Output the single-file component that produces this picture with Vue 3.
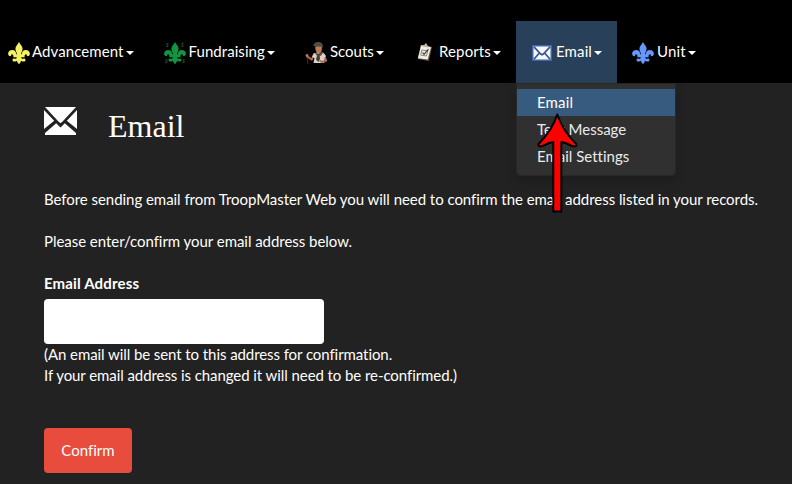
<script setup>
import { ref } from 'vue'

const email = ref('')
const nav = [
  { name: 'Advancement', icon: 'lis', tone: 'yellow' },
  { name: 'Fundraising', icon: 'lis', tone: 'green' },
  { name: 'Scouts', icon: 'scout' },
  { name: 'Reports', icon: 'report' },
  { name: 'Email', icon: 'mail', active: true },
  { name: 'Unit', icon: 'lis', tone: 'blue' },
]
const menu = ['Email', 'Text Message', 'Email Settings']
</script>

<template>
  <div class="page">
    <header class="navbar">
      <nav class="nav">
        <a v-for="item in nav" :key="item.name" class="nav-item" :class="[item.name.toLowerCase(), { active: item.active }]">
          <svg v-if="item.icon === 'lis'" class="icon" :class="item.tone" viewBox="0 0 22 22">
            <path d="M11 0C10.2 2.2 7.4 4 7.4 6.7C7.4 8.6 8.6 10 9 12.2H8.2C8 9.4 6.6 8 4.3 8C1.8 8 .1 9.6 .1 11.7C.1 13.4 1.6 14.7 3.2 14.1C2.7 13 3.4 12.2 4.4 12.4C5.3 12.6 5.5 13.4 5.4 15.2H8.8C8.6 16.5 7.8 17.2 6.7 16.7C5.6 16.2 4.4 17 4.5 18.2C4.7 19.7 6.6 20.2 8.9 18.7C9.3 20.2 10.1 21.2 11 22C11.9 21.2 12.7 20.2 13.1 18.7C15.4 20.2 17.3 19.7 17.5 18.2C17.6 17 16.4 16.2 15.3 16.7C14.2 17.2 13.4 16.5 13.2 15.2H16.6C16.5 13.4 16.7 12.6 17.6 12.4C18.6 12.2 19.3 13 18.8 14.1C20.4 14.7 21.9 13.4 21.9 11.7C21.9 9.6 20.2 8 17.7 8C15.4 8 14 9.4 13.8 12.2H13C13.4 10 14.6 8.6 14.6 6.7C14.6 4 11.8 2.2 11 0Z" />
            <path v-if="item.tone === 'green'" class="money" d="M4.5 1.5C2.8 .8 2 2.4 3.4 3S4.5 5.2 2.3 4.4M19.5 1.5C17.8 .8 17 2.4 18.4 3S19.5 5.2 17.3 4.4M3.5 17.8C1.8 17.1 1 18.5 2.4 19S3.5 21 1.3 20.4M20.7 17.8C19 17.1 18.2 18.5 19.6 19S20.7 21 18.5 20.4" />
          </svg>

          <svg v-else-if="item.icon === 'scout'" class="icon" viewBox="0 0 22 22">
            <path d="M1.7 12L3 22" stroke="#4d2a19" stroke-width="1" />
            <path d="M9 12L6.8 17.6L2.2 14.4" fill="none" stroke="#a9684d" stroke-width="2" stroke-linecap="round" stroke-linejoin="round" />
            <path d="M9 11.5L13 10L18.5 10.8L21 14L20 16L19 21H8.5L9.5 16L7 15Z" fill="#ddd0c8" />
            <path d="M10.7 10.3L12 13.5L11 17.5L13.3 20L15 17L14.7 13.7L17.5 10.8L15.8 9.7L13.6 12Z" fill="#3c4438" />
            <path d="M10.3 11.3L12.7 14M17.5 11.2L15.3 14" stroke="#9b3a35" stroke-width="1" />
            <path d="M20 15.5L21.2 18.5L17 20L14.5 18.5" fill="none" stroke="#ad6d50" stroke-width="1.9" stroke-linejoin="round" />
            <path d="M10.3 4.2H16.8V8.2C16.4 10 14.8 11.5 13 10.8C11.5 10.2 10 8.5 10.3 4.2Z" fill="#bb7959" />
            <path d="M8.2 3.8C9 .2 13-.5 15.6.6C17.7 1.3 18.2 3.6 17.7 6.3L16.3 4.2C13 3.5 11.5 4.7 8.2 3.8Z" fill="#4a5047" />
            <circle cx="2" cy="13.5" r="1.4" fill="#b37a58" />
          </svg>

          <svg v-else-if="item.icon === 'report'" class="icon report-icon" viewBox="0 0 17 20">
            <path d="M4 1.8L16 4L12.5 19L.7 17Z" fill="#65503d" />
            <path d="M4.4 2.4L14.9 4.3L11.4 17.5L1 16Z" fill="#f0eee8" />
            <path d="M6.4 2L8.2 1.7L9 .3L10.5.6L10.8 2.4L12.2 3L11.8 4.6L5.7 3.5Z" fill="#c5b49e" />
            <path d="M5.2 7.3L11.5 8.3L10 13.7L4 12.8Z" fill="none" stroke="#777269" stroke-width=".9" />
            <path d="M6 10L7.5 12L12.2 6.5" fill="none" stroke="#3d3b38" stroke-width="1.3" />
          </svg>

          <svg v-else class="icon mail-icon" viewBox="0 0 20 16">
            <path d="M0 0H20V16H0Z" fill="#4164ac" />
            <path d="M1.5 1.5H18.5V14.5H1.5Z" fill="#f5f7fb" />
            <path d="M2 1.8L8.7 9L10 9.8L11.3 9L18 1.8M2 14.2L7.3 8M18 14.2L12.7 8" fill="none" stroke="#34578f" stroke-width="1.7" />
          </svg>
          <span class="label">{{ item.name }}</span><i class="caret" />

          <span v-if="item.active" class="dropdown">
            <span v-for="(option, i) in menu" :key="option" class="option" :class="{ selected: i === 0 }">{{ option }}</span>
          </span>
        </a>
      </nav>
    </header>

    <main class="content">
      <div class="heading">
        <svg class="heading-icon" viewBox="0 0 33 28">
          <path d="M1 0H32L18.6 14.5L16.5 16.2L14.4 14.5ZM0 3L10.2 13.7L0 22ZM33 3L22.8 13.7L33 22ZM1 28V26L12.2 16.2L16.5 20.6L20.8 16.2L32 26V28Z" fill="#fff" />
        </svg>
        <h1>Email</h1>
      </div>
      <p class="intro">Before sending email from TroopMaster Web you will need to confirm the email address listed in your records.</p>
      <p>Please enter/confirm your email address below.</p>
      <label for="email">Email Address</label>
      <input id="email" v-model="email" type="email">
      <div class="help">(An email will be sent to this address for confirmation.<br>If your email address is changed it will need to be re-confirmed.)</div>
      <button type="button">Confirm</button>
    </main>

    <svg class="arrow" viewBox="0 0 42 102">
      <path d="M21.3 2.5C25 13.5 30 22 40.2 32C41 34 39 35 36 34L29.5 31L25.3 30V99.5H17.3V30L13 31L6.5 34C3.5 35 1.8 34 2.6 32C12.5 22 17.7 13.5 21.3 2.5Z" />
    </svg>
  </div>
</template>

<style>
body { background: #222; }
</style>

<style scoped>
* { box-sizing: border-box; }
.page { position: relative; width: 792px; height: 484px; overflow: hidden; background: #222; color: #fff; font: 15px/21px Lato, sans-serif; font-variant-ligatures: none; }
.navbar { height: 83px; padding-top: 21px; background: #000; }
.nav { display: grid; grid-template-columns: 149px 141px 110px 116px 101px 95px; height: 62px; }
.nav-item { position: relative; display: flex; align-items: center; padding: 0 0 2px 15px; color: #fff; }
.nav-item.advancement { padding-left: 8px; }
.nav-item.reports { padding-left: 17px; }
.nav-item.email { padding-left: 16px; }
.nav-item.active { background: #284059; }
.icon { width: 22px; height: 22px; flex: none; margin: 3px 2px 0 0; }
.fundraising .icon, .scouts .icon, .unit .icon { margin-right: 3px; }
.fundraising .icon { margin-right: 2.5px; }
.report-icon { width: 16px; height: 19px; margin: 3px 6px 0 0; }
.mail-icon { width: 20px; height: 16px; margin: 4px 4px 0 0; }
.advancement .label { letter-spacing: .08px; }
.reports .label, .email .label, .unit .label { letter-spacing: .13px; }
.fundraising .label { letter-spacing: .06px; }
.yellow { fill: #f5f164; }
.green { fill: #109541; }
.blue { fill: #6797fa; }
.money { fill: none; stroke: #31643f; stroke-width: .9; }
.caret { width: 0; height: 0; margin: 3px 0 0 2px; border-top: 4px solid #fff; border-right: 4px solid transparent; border-left: 4px solid transparent; }
.dropdown { position: absolute; z-index: 1; top: 62px; left: 0; width: 160px; height: 93px; padding: 5px 0; border: 1px solid #282828; border-radius: 0 0 4px 4px; background: #303030; background-clip: padding-box; box-shadow: 0 6px 12px rgba(0, 0, 0, .175); }
.option { display: block; height: 27px; padding: 3px 20px; line-height: 21px; color: #ebebeb; white-space: nowrap; }
.option.selected { background: #375a7f; color: #fff; letter-spacing: .15px; }
.content { padding: 24px 0 0 44px; }
.heading { display: flex; height: 82px; }
.heading-icon { width: 33px; height: 28px; flex: none; }
h1 { margin: 3px 0 0 31px; font: 400 32px/33px "Liberation Serif", serif; }
p { margin: 0 0 21px; white-space: nowrap; letter-spacing: -.04px; }
p.intro { letter-spacing: -.045px; }
label { display: block; margin-bottom: 5px; font-weight: 700; letter-spacing: .15px; }
input { display: block; width: 280px; height: 45px; padding: 10px 15px; border: 0; border-radius: 4px; background: #fff; color: #464545; font: inherit; }
.help { height: 84px; letter-spacing: -.075px; }
button { display: block; width: 88px; height: 45px; padding: 0; border: 0; border-radius: 4px; background: #e74c3c; color: #fff; font: inherit; }
.arrow { position: absolute; z-index: 2; top: 112px; left: 536px; width: 42px; height: 102px; fill: #f00; stroke: #000; stroke-width: 2; stroke-linejoin: round; }
</style>
